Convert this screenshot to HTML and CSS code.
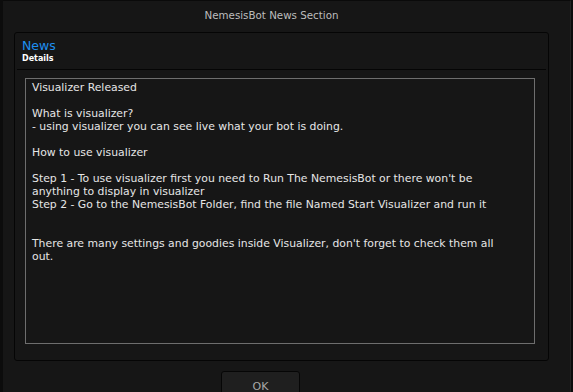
FILE: index.html
```html
<!DOCTYPE html>
<html>
<head>
  <title>NemesisBot News Section</title>
  <meta charset="UTF-8">
  <link rel="stylesheet" href="styles.css">
</head>
<body>
  <div class="window">
    <div class="title-bar">NemesisBot News Section</div>

    <div class="panel">
      <div class="panel-head">
        <div class="panel-title">News</div>
        <div class="panel-sub">Details</div>
      </div>
      <div class="news-text">Visualizer Released

What is visualizer?
- using visualizer you can see live what your bot is doing.

How to use visualizer

Step 1 - To use visualizer first you need to Run The NemesisBot or there won't be
anything to display in visualizer
Step 2 - Go to the NemesisBot Folder, find the file Named Start Visualizer and run it


There are many settings and goodies inside Visualizer, don't forget to check them all
out.</div>
    </div>

    <div class="button-bar">
      <button class="ok-button">OK</button>
    </div>
  </div>
</body>
</html>
```

FILE: styles.css
```css
html, body {
  margin: 0;
  padding: 0;
  background: #0c0c0c;
  width: 573px;
  height: 392px;
  overflow: hidden;
}
body {
  font: 11px/13px "DejaVu Sans", Tahoma, sans-serif;
  color: #e6e6e6;
}
.window {
  margin-left: 3px;
  margin-right: 2px;
  height: 392px;
  background: #161616;
  border-top: 1px solid #0a0a0a;
  border-right: 1px solid #222;
  box-sizing: border-box;
  padding: 0 21px 0 11px;
}
.title-bar {
  height: 31px;
  line-height: 29px;
  text-align: center;
  color: #bdbdbd;
  font-size: 10.3px;
  padding-right: 20px;
}
.panel {
  border: 1px solid #050505;
  border-radius: 3px;
  height: 329px;
  box-sizing: border-box;
  padding: 0 2px;
}
.panel-head {
  height: 37px;
  border-bottom: 1px solid #050505;
  padding: 6px 0 0 5px;
  box-sizing: border-box;
}
.panel-title {
  color: #1e8ff0;
  font-size: 12.5px;
  line-height: 14px;
}
.panel-sub {
  color: #ffffff;
  font-weight: bold;
  font-size: 8px;
  line-height: 11px;
}
.news-text {
  margin: 8px 11px 0 8px;
  height: 266px;
  border: 1px solid #6e6e6e;
  box-sizing: border-box;
  padding: 2px 6px;
  white-space: pre;
  overflow: hidden;
  font-size: 10.85px;
}
.button-bar {
  padding-top: 10px;
  padding-left: 207px;
}
.ok-button {
  width: 79px;
  height: 28px;
  background: #1f1f1f;
  border: 1px solid #060606;
  border-radius: 3px;
  color: #a8a8a8;
  font: 11px "DejaVu Sans", Tahoma, sans-serif;
  padding-top: 4px;
}
```
